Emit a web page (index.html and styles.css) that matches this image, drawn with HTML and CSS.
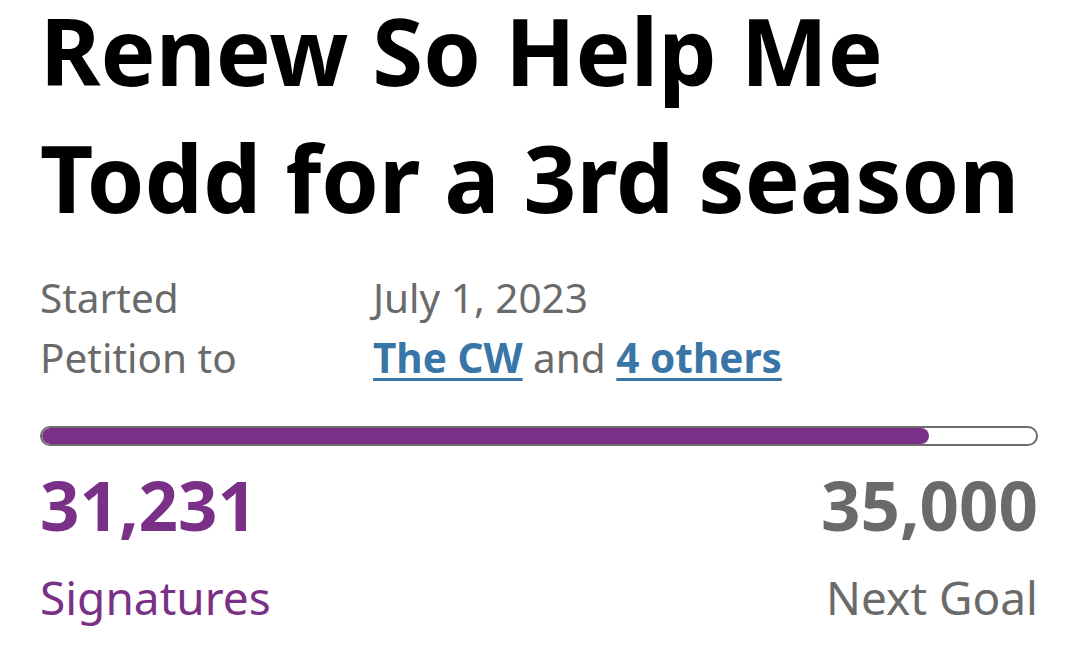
FILE: index.html
```html
<!DOCTYPE html>
<html lang="en">
<head>
<meta charset="utf-8">
<title>Renew So Help Me Todd for a 3rd season</title>
<link rel="stylesheet" href="styles.css">
</head>
<body>
<main class="petition">
  <h1 class="title">Renew So Help Me Todd for a 3rd season</h1>
  <dl class="meta">
    <dt class="meta-label">Started</dt>
    <dd class="meta-value">July 1, 2023</dd>
    <dt class="meta-label">Petition to</dt>
    <dd class="meta-value"><a class="link" href="#">The CW</a> and <a class="link" href="#">4 others</a></dd>
  </dl>
  <div class="progress"><div class="progress-fill" style="width: 89.23%"></div></div>
  <div class="stats">
    <div class="stat stat-current">
      <div class="stat-num">31,231</div>
      <div class="stat-label">Signatures</div>
    </div>
    <div class="stat stat-goal">
      <div class="stat-num">35,000</div>
      <div class="stat-label">Next Goal</div>
    </div>
  </div>
</main>
</body>
</html>
```
FILE: styles.css
```css
html, body {
  margin: 0;
  padding: 0;
  background: #ffffff;
}
body {
  font-family: "Noto Sans", "Open Sans", sans-serif;
  color: #000;
  overflow: hidden;
}
.petition {
  padding: 0 38px 0 40px;
}
.title {
  margin: -13px 0 0 0;
  font-size: 92.4px;
  line-height: 127px;
  font-weight: 700;
  color: #000;
}
.meta {
  margin: 27px 0 0 0;
  display: grid;
  grid-template-columns: 333px 1fr;
  font-size: 40.5px;
  line-height: 60px;
  color: #6a6a6a;
}
.meta-label, .meta-value {
  margin: 0;
}
.link {
  color: #3a75a8;
  font-weight: 700;
  text-decoration: underline;
  text-decoration-thickness: 3px;
  text-underline-offset: 5px;
}
.progress {
  margin-top: 38px;
  height: 20px;
  box-sizing: border-box;
  border: 2px solid #6e6e6e;
  border-radius: 10px;
  overflow: hidden;
  background: #fff;
}
.progress-fill {
  height: 100%;
  background: #7b3088;
  border-radius: 10px;
}
.stats {
  margin-top: 17px;
  display: flex;
  justify-content: space-between;
}
.stat-num {
  font-size: 69px;
  line-height: 82px;
  font-weight: 700;
}
.stat-label {
  margin-top: 22px;
  font-size: 46px;
  line-height: 60px;
}
.stat-current {
  color: #7b3088;
}
.stat-goal {
  color: #6a6a6a;
  text-align: right;
}
```
